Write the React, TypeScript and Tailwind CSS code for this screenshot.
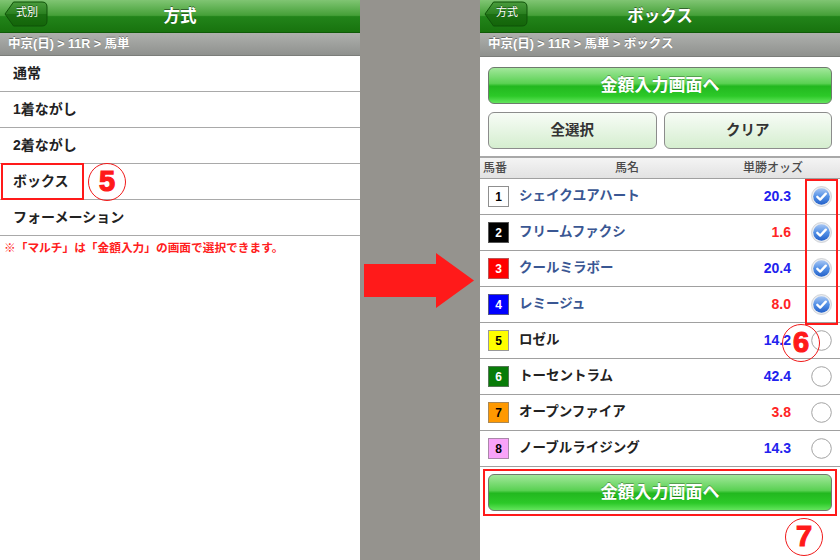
import React from "react";

// 方式選択 → ボックス選択 の説明画面
const methods = ["通常", "1着ながし", "2着ながし", "ボックス", "フォーメーション"];

const horses = [
  { no: 1, name: "シェイクユアハート", odds: "20.3", hot: false, sel: true, box: "bg-white text-black border-[#8f8f8f]" },
  { no: 2, name: "フリームファクシ", odds: "1.6", hot: true, sel: true, box: "bg-black text-white border-[#555]" },
  { no: 3, name: "クールミラボー", odds: "20.4", hot: false, sel: true, box: "bg-[#ff0000] text-white border-[#b55]" },
  { no: 4, name: "レミージュ", odds: "8.0", hot: true, sel: true, box: "bg-[#0000ff] text-white border-[#558]" },
  { no: 5, name: "ロゼル", odds: "14.2", hot: false, sel: false, box: "bg-[#ffff00] text-black border-[#999]" },
  { no: 6, name: "トーセントラム", odds: "42.4", hot: false, sel: false, box: "bg-[#087c08] text-white border-[#575]" },
  { no: 7, name: "オープンファイア", odds: "3.8", hot: true, sel: false, box: "bg-[#ff9900] text-black border-[#a85]" },
  { no: 8, name: "ノーブルライジング", odds: "14.3", hot: false, sel: false, box: "bg-[#f9a3f9] text-black border-[#a8a]" },
];

function BackButton({ label }: { label: string }) {
  return (
    <div className="relative ml-[4px] mt-[1px] h-[26px] w-[44px]">
      <svg width="44" height="26" viewBox="0 0 44 26" className="absolute inset-0">
        <defs>
          <linearGradient id="backg" x1="0" y1="0" x2="0" y2="1">
            <stop offset="0" stopColor="#4a9c3d" />
            <stop offset="0.5" stopColor="#2a8020" />
            <stop offset="0.52" stopColor="#1b6f12" />
            <stop offset="1" stopColor="#136509" />
          </linearGradient>
        </defs>
        <path
          d="M9.5 1 H38 Q43 1 43 6 V20 Q43 25 38 25 H9.5 L1 13 Z"
          fill="url(#backg)"
          stroke="#0f5208"
          strokeWidth="1"
        />
      </svg>
      <span className="relative block pl-[12px] pt-[4px] text-[11px] leading-[14px] text-white [text-shadow:0_-1px_0_rgba(0,0,0,0.4)]">
        {label}
      </span>
    </div>
  );
}

function NavBar({ back, title }: { back: string; title: string }) {
  return (
    <div className="relative flex h-[33px] items-start bg-[linear-gradient(#80c573,#45a038_48%,#22841a_52%,#18730e)] border-b border-[#0f5a08]">
      <BackButton label={back} />
      <div className="absolute inset-0 flex items-center justify-center text-[16.5px] font-bold text-white [text-shadow:0_-1px_0_rgba(0,0,0,0.45)]">
        {title}
      </div>
    </div>
  );
}

function Crumb({ text, tall }: { text: string; tall?: boolean }) {
  return (
    <div
      className={
        tall
          ? "flex h-[24px] items-center border-b border-[#7b7d7a] bg-[linear-gradient(#aeb0ad,#8f918e)] pl-[8px] text-[12.5px] font-bold text-white [text-shadow:0_-1px_0_rgba(0,0,0,0.35)]"
          : "flex h-[23px] items-center border-b border-[#7b7d7a] bg-[linear-gradient(#aeb0ad,#8f918e)] pl-[8px] text-[12.5px] font-bold text-white [text-shadow:0_-1px_0_rgba(0,0,0,0.35)]"
      }
    >
      {text}
    </div>
  );
}

function Ring({ n, className }: { n: string; className: string }) {
  return (
    <div
      className={
        "absolute flex h-[38px] w-[38px] items-center justify-center rounded-full border-[1.5px] border-[#f01a1a] pb-[1px] text-[29px] font-bold leading-none text-[#ff1a1a] [-webkit-text-stroke:1.2px_#ff1a1a] " +
        className
      }
    >
      {n}
    </div>
  );
}

function Check({ on }: { on: boolean }) {
  if (!on) {
    return (
      <svg width="21" height="21" viewBox="0 0 21 21">
        <circle cx="10.5" cy="10.5" r="9.8" fill="#fff" stroke="#a3a3a3" strokeWidth="1" />
      </svg>
    );
  }
  return (
    <svg width="21" height="21" viewBox="0 0 21 21">
      <defs>
        <linearGradient id="chk" x1="0" y1="0" x2="0" y2="1">
          <stop offset="0" stopColor="#a8c7f4" />
          <stop offset="0.5" stopColor="#5390e6" />
          <stop offset="1" stopColor="#2360c8" />
        </linearGradient>
      </defs>
      <circle cx="10.5" cy="10.5" r="10" fill="#e9ecf0" stroke="#b9bcc2" strokeWidth="0.6" />
      <circle cx="10.5" cy="10.5" r="8.3" fill="url(#chk)" />
      <path
        d="M6.3 10.8 L9.2 13.6 L14.8 7.6"
        stroke="#fff"
        strokeWidth="2.3"
        fill="none"
        strokeLinecap="round"
        strokeLinejoin="round"
      />
    </svg>
  );
}

function GreenButton() {
  return (
    <button className="flex h-[37px] w-full items-center justify-center rounded-[6px] border border-[#6e7a6d] bg-[linear-gradient(#a2e79b,#5ad153_44%,#22b81f_52%,#2cc928_80%,#63e55d)] text-[17px] font-bold text-white [text-shadow:0_-1px_0_rgba(0,0,0,0.3)]">
      金額入力画面へ
    </button>
  );
}

export default function App() {
  return (
    <div className="flex h-[560px] w-[840px] overflow-hidden font-['Liberation_Sans','Noto_Sans_CJK_JP',sans-serif]">
      {/* 左: 方式 */}
      <div className="w-[360px] bg-white">
        <NavBar back="式別" title="方式" />
        <Crumb text="中京(日) > 11R > 馬単" />
        {methods.map((m) => (
          <div
            key={m}
            className="relative flex h-[36px] items-center border-b border-[#a9a9a9] pl-[13px] text-[14px] font-bold text-[#222]"
          >
            {m}
            {m === "ボックス" && (
              <>
                <div className="absolute -top-[1px] left-[1px] h-[37px] w-[83px] border-2 border-[#ff1a1a]" />
                <Ring n="5" className="-top-[1px] left-[88px]" />
              </>
            )}
          </div>
        ))}
        <p className="pl-[4px] pt-[3px] text-[11.7px] font-bold text-[#ff2020]">
          ※「マルチ」は「金額入力」の画面で選択できます。
        </p>
      </div>

      {/* 中央: 矢印 */}
      <div className="flex w-[120px] items-center justify-center bg-[#95938e]">
        <svg width="110" height="55" viewBox="0 0 110 55" className="ml-[-2px]">
          <polygon points="0,11 72,11 72,0 110,27.5 72,55 72,44 0,44" fill="#ff1a1a" />
        </svg>
      </div>

      {/* 右: ボックス */}
      <div className="relative w-[360px] bg-white">
        <NavBar back="方式" title="ボックス" />
        <Crumb text="中京(日) > 11R > 馬単 > ボックス" tall />

        <div className="px-[8px] pt-[10px]">
          <GreenButton />
          <div className="mt-[8px] flex gap-[7px]">
            <button className="h-[37px] flex-1 rounded-[6px] border border-[#8c8c8c] bg-[linear-gradient(#f7fcf6,#e6f5e3_50%,#d5eecf)] text-[14.5px] font-bold text-[#333]">
              全選択
            </button>
            <button className="h-[37px] flex-1 rounded-[6px] border border-[#8c8c8c] bg-[linear-gradient(#f7fcf6,#e6f5e3_50%,#d5eecf)] text-[14.5px] font-bold text-[#333]">
              クリア
            </button>
          </div>
        </div>

        <div className="mt-[7px] flex h-[23px] items-center border-t-2 border-b border-t-[#a8a8a8] border-b-[#a0a0a0] bg-[linear-gradient(#f4f4f4,#e2e2e2)] pl-[3px] text-[12px] font-medium text-[#4a4a4a]">
          <span className="w-[40px]">馬番</span>
          <span className="w-[208px] text-center">馬名</span>
          <span className="ml-[12px]">単勝オッズ</span>
        </div>

        {horses.map((h) => (
          <div
            key={h.no}
            className="flex h-[36px] items-center border-b border-[#a0a0a0] pl-[8px] pr-[8px]"
          >
            <div
              className={
                "flex h-[21px] w-[21px] items-center justify-center border text-[12px] font-bold " + h.box
              }
            >
              {h.no}
            </div>
            <span
              className={
                h.sel
                  ? "ml-[10px] flex-1 text-[13.5px] font-bold text-[#3a5793]"
                  : "ml-[10px] flex-1 text-[13.5px] font-bold text-[#222]"
              }
            >
              {h.name}
            </span>
            <span
              className={
                h.hot
                  ? "mr-[20px] text-[14px] font-bold text-[#ff2424]"
                  : "mr-[20px] text-[14px] font-bold text-[#2222ee]"
              }
            >
              {h.odds}
            </span>
            <Check on={h.sel} />
          </div>
        ))}

        <div className="mx-[3px] mt-[2px] border-2 border-[#ff1a1a] p-[3px]">
          <GreenButton />
        </div>

        {/* 注記の枠と番号 */}
        <div className="absolute left-[325px] top-[179px] h-[146px] w-[33px] border-2 border-[#ff1a1a]" />
        <Ring n="6" className="left-[302px] top-[324px]" />
        <Ring n="7" className="left-[305px] top-[518px]" />
      </div>
    </div>
  );
}
